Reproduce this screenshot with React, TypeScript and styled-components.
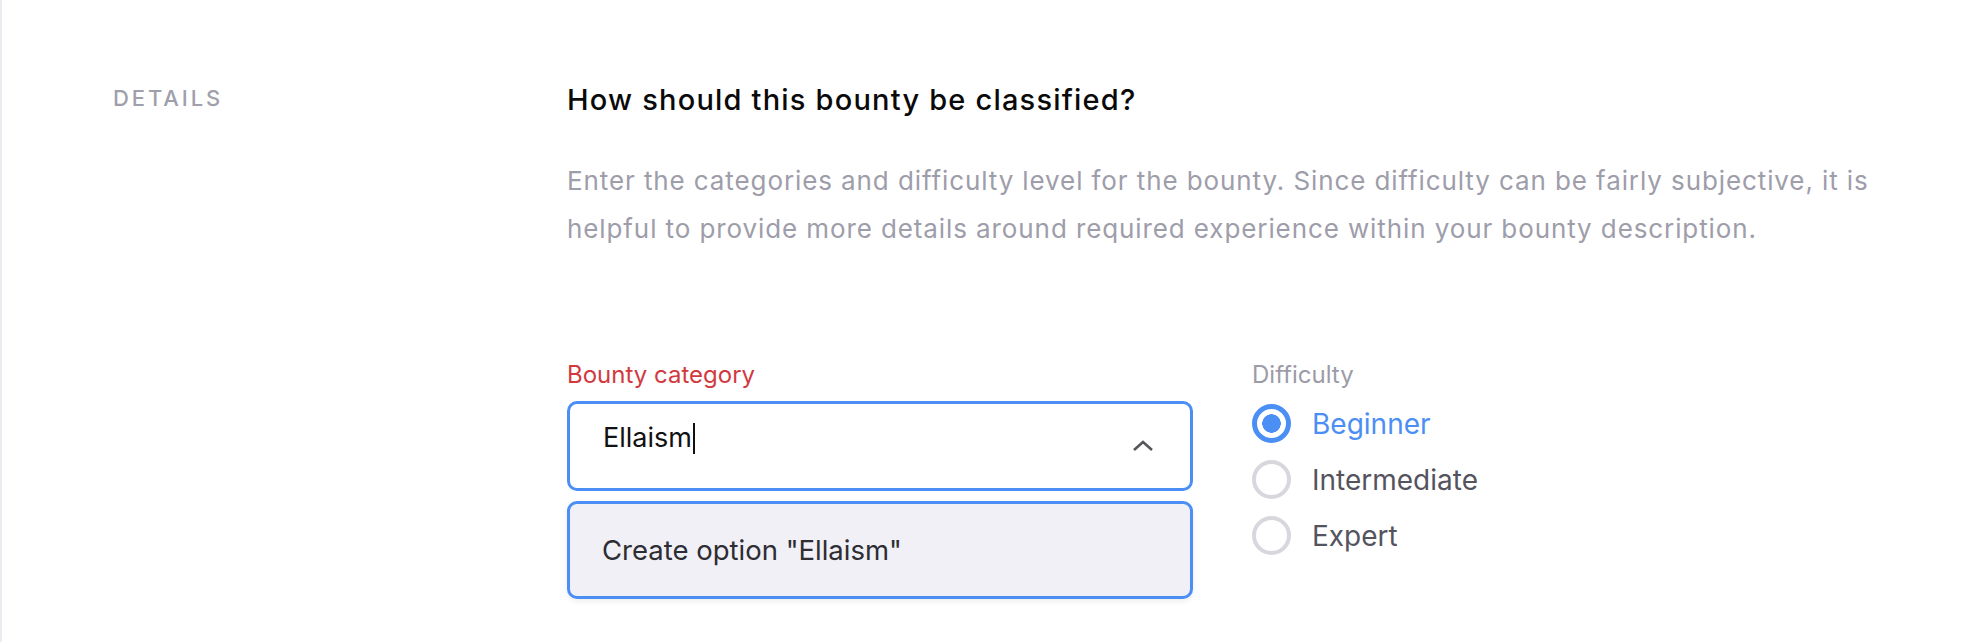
import styled, { createGlobalStyle } from "styled-components";

const GlobalStyle = createGlobalStyle`
  * {
    box-sizing: border-box;
  }
  body {
    margin: 0;
    background: #ffffff;
    font-family: Inter, "Noto Sans", sans-serif;
  }
`;

const difficulties = ["Beginner", "Intermediate", "Expert"];

const App = () => {
  const selected = "Beginner";

  return (
    <>
      <GlobalStyle />
      <Page>
        <Aside>
          <SectionLabel>DETAILS</SectionLabel>
        </Aside>
        <Main>
          <Heading>How should this bounty be classified?</Heading>
          <Description>
            Enter the categories and difficulty level for the bounty. Since
            difficulty can be fairly subjective, it is helpful to provide more
            details around required experience within your bounty description.
          </Description>

          <FieldRow>
            <CategoryField>
              <FieldLabel $error>Bounty category</FieldLabel>
              <SelectBox>
                <InputText>
                  Ellaism
                  <Caret />
                </InputText>
                <Chevron width="22" height="12" viewBox="0 0 22 12">
                  <polyline
                    points="2,10 11,2 20,10"
                    fill="none"
                    stroke="#55555c"
                    strokeWidth="2.6"
                  />
                </Chevron>
              </SelectBox>
              <Menu>
                <MenuOption>Create option "Ellaism"</MenuOption>
              </Menu>
            </CategoryField>

            <DifficultyField>
              <FieldLabel>Difficulty</FieldLabel>
              <RadioList>
                {difficulties.map((level) => (
                  <RadioRow key={level}>
                    <RadioCircle $checked={level === selected} />
                    <RadioText $checked={level === selected}>{level}</RadioText>
                  </RadioRow>
                ))}
              </RadioList>
            </DifficultyField>
          </FieldRow>
        </Main>
      </Page>
    </>
  );
};

export default App;

const Page = styled.div`
  display: flex;
  align-items: flex-start;
  min-height: 100vh;
  padding-top: 82px;
  border-left: 2px solid #ebebf1;
`;

const Aside = styled.div`
  width: 565px;
  flex-shrink: 0;
  padding-left: 111px;
  padding-top: 2px;
`;

const SectionLabel = styled.div`
  font-size: 22px;
  line-height: 28px;
  font-weight: 500;
  letter-spacing: 2.9px;
  color: #a09fac;
`;

const Main = styled.div`
  display: flex;
  flex-direction: column;
`;

const Heading = styled.h2`
  margin: 0;
  font-size: 29px;
  line-height: 36px;
  font-weight: 500;
  letter-spacing: 1.2px;
  color: #0a0a0a;
`;

const Description = styled.p`
  margin: 39px 0 0;
  width: 1340px;
  font-size: 26px;
  line-height: 48px;
  letter-spacing: 0.9px;
  color: #9e9daa;
`;

const FieldRow = styled.div`
  display: flex;
  gap: 59px;
  margin-top: 108px;
`;

const CategoryField = styled.div`
  width: 626px;
  display: flex;
  flex-direction: column;
`;

const FieldLabel = styled.div<{ $error?: boolean }>`
  font-size: 24px;
  line-height: 28px;
  color: ${(p) => (p.$error ? "#d2393f" : "#9c9ba8")};
`;

const SelectBox = styled.div`
  margin-top: 12px;
  height: 90px;
  border: 3px solid #4b8ff5;
  border-radius: 10px;
  background: #ffffff;
  display: flex;
  align-items: center;
  justify-content: space-between;
  padding: 0 36px 0 33px;
`;

const InputText = styled.div`
  display: flex;
  align-items: center;
  font-size: 27px;
  line-height: 36px;
  color: #111111;
  padding-bottom: 16px;
`;

const Caret = styled.span`
  display: inline-block;
  width: 2px;
  height: 31px;
  margin-left: 1px;
  background: #111111;
`;

const Chevron = styled.svg`
  display: block;
`;

const Menu = styled.div`
  margin-top: 10px;
  height: 98px;
  border: 3px solid #4b8ff5;
  border-radius: 10px;
  background: #f0f0f6;
  display: flex;
  align-items: center;
  padding: 0 32px;
  box-shadow: 0 2px 6px rgba(0, 0, 0, 0.08);
`;

const MenuOption = styled.div`
  font-size: 27.5px;
  line-height: 36px;
  color: #2d2d33;
`;

const DifficultyField = styled.div`
  display: flex;
  flex-direction: column;
`;

const RadioList = styled.div`
  display: flex;
  flex-direction: column;
  gap: 17px;
  margin-top: 15px;
`;

const RadioRow = styled.div`
  display: flex;
  align-items: center;
  gap: 21px;
  height: 39px;
`;

const RadioCircle = styled.span<{ $checked?: boolean }>`
  width: 39px;
  height: 39px;
  border-radius: 50%;
  flex-shrink: 0;
  border: ${(p) => (p.$checked ? "5px solid #4b8ff5" : "4px solid #d7d7de")};
  background: ${(p) =>
    p.$checked
      ? "radial-gradient(circle, #4b8ff5 0 9px, #ffffff 9.5px)"
      : "#ffffff"};
`;

const RadioText = styled.span<{ $checked?: boolean }>`
  font-size: 28px;
  line-height: 36px;
  color: ${(p) => (p.$checked ? "#4b8ff5" : "#55545e")};
`;
